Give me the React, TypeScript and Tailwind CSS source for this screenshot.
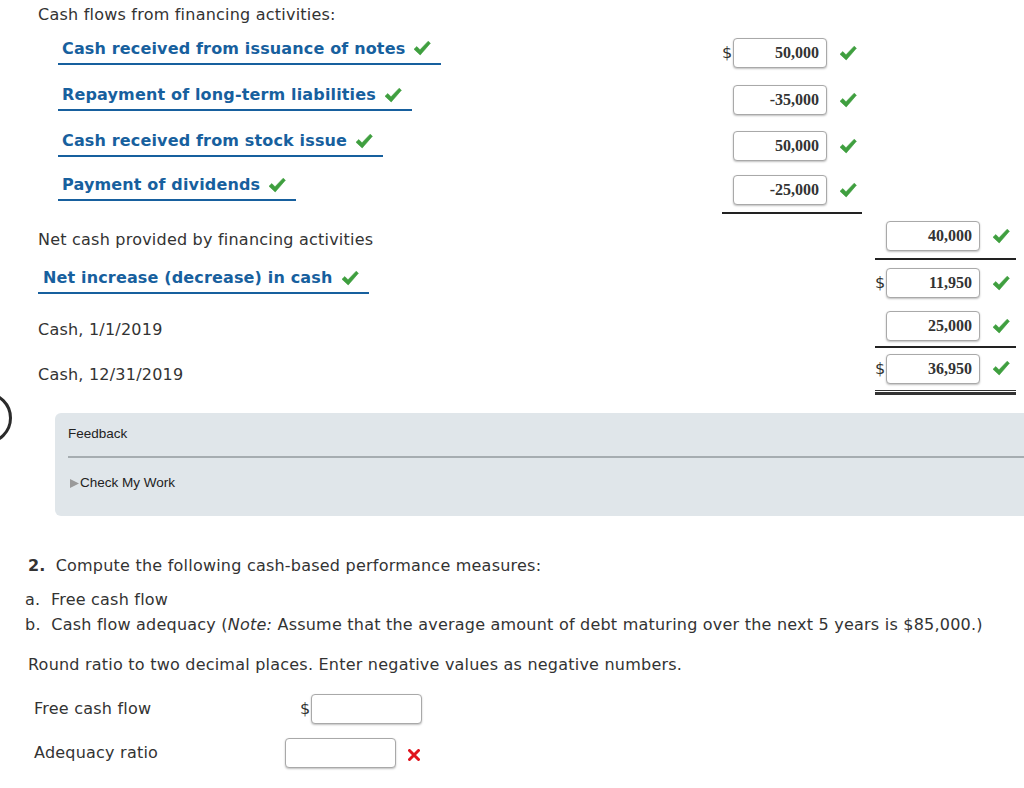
import React from 'react';

const BLUE = 'text-[#17609e]';

function Check() {
  return (
    <svg width="18" height="17" viewBox="0 0 18 17" className="shrink-0">
      <path d="M1 9.2 L3.8 6.6 L7 9.8 L15.2 1.2 L17.4 3.2 L7.2 15 Z" fill="#3f9f3f" strokeLinejoin="round" stroke="#3f9f3f" strokeWidth="0.6" />
    </svg>
  );
}

function Cross() {
  return (
    <svg width="12" height="12" viewBox="0 0 12 12">
      <path d="M1.5 1.5 L10.5 10.5 M10.5 1.5 L1.5 10.5" stroke="#e0141e" strokeWidth="3" strokeLinecap="round" />
    </svg>
  );
}

function NumBox({ value, w = 'w-[94px]' }: { value?: string; w?: string }) {
  return (
    <div
      className={`${w} h-[30px] rounded-[4px] border border-[#a9a9a9] bg-white shadow-[0_1px_2px_rgba(0,0,0,0.25)] flex items-center justify-end pr-[7px] text-[16px] tracking-normal font-bold text-[#333] font-['Liberation_Serif',serif]`}
    >
      {value}
    </div>
  );
}

// one amount cell: $ sign slot, box, tick
function Amount({ value, dollar }: { value: string; dollar?: boolean }) {
  return (
    <div className="flex items-center">
      <span className="w-[11px] text-[16px] text-[#333] font-['DejaVu_Sans',sans-serif]">{dollar ? '$' : ''}</span>
      <NumBox value={value} />
      <span className="ml-[12px]"><Check /></span>
    </div>
  );
}

function BlueLabel({ text, pad = 'pl-[4px]' }: { text: string; pad?: string }) {
  return (
    <div className={`inline-flex items-center gap-[8px] ${pad} pr-[10px] pb-[2px] border-b-2 border-[#17609e] font-bold tracking-[0.15px] ${BLUE}`}>
      <span>{text}</span>
      <Check />
    </div>
  );
}

export default function App() {
  return (
    <div className="w-[1024px] h-[788px] overflow-hidden bg-white relative font-['DejaVu_Sans',sans-serif] text-[16px] tracking-[0.22px] text-[#333]">
      {/* statement */}
      <div className="flex flex-col">
        <div className="h-[29px] flex items-center pl-[38px]">Cash flows from financing activities:</div>

        <div className="h-[48px] flex items-center">
          <div className="w-[722px] pl-[58px] pb-[5px]"><BlueLabel text="Cash received from issuance of notes" /></div>
          <Amount value="50,000" dollar />
        </div>
        <div className="h-[46px] flex items-center">
          <div className="w-[722px] pl-[58px] pb-[6px]"><BlueLabel text="Repayment of long-term liabilities" /></div>
          <Amount value="-35,000" />
        </div>
        <div className="h-[46px] flex items-center">
          <div className="w-[722px] pl-[58px] pb-[6px]"><BlueLabel text="Cash received from stock issue" /></div>
          <Amount value="50,000" />
        </div>
        <div className="h-[42px] flex items-center">
          <div className="w-[722px] pl-[58px] pb-[6px]"><BlueLabel text="Payment of dividends" /></div>
          <Amount value="-25,000" />
        </div>
        <div className="flex pl-[722px] pt-[1px]"><div className="w-[140px] h-[2px] bg-[#222]" /></div>

        <div className="h-[44px] flex items-center">
          <div className="w-[875px] pl-[38px] pt-[8px]">Net cash provided by financing activities</div>
          <Amount value="40,000" />
        </div>
        <div className="flex pl-[875px]"><div className="w-[141px] h-[2px] bg-[#222]" /></div>

        <div className="h-[46px] flex items-center">
          <div className="w-[875px] pl-[38px] pb-[6px]"><BlueLabel text="Net increase (decrease) in cash" pad="pl-[5px]" /></div>
          <Amount value="11,950" dollar />
        </div>
        <div className="h-[40px] flex items-center">
          <div className="w-[875px] pl-[38px] pt-[8px]">Cash, 1/1/2019</div>
          <Amount value="25,000" />
        </div>
        <div className="flex pl-[875px]"><div className="w-[141px] h-[2px] bg-[#222]" /></div>

        <div className="h-[41px] flex items-center">
          <div className="w-[875px] pl-[38px] pt-[13px]">Cash, 12/31/2019</div>
          <Amount value="36,950" dollar />
        </div>
        <div className="flex pl-[875px] pt-[1px]"><div className="w-[141px] h-[5px] border-t border-b-[3px] border-[#333]" /></div>
      </div>

      {/* stray circle at left edge */}
      <div className="absolute left-[-40px] top-[392px] w-[52px] h-[52px] rounded-full border-[3px] border-[#2b2b2b]" />

      {/* feedback */}
      <div className="ml-[55px] mt-[18px] h-[103px] rounded-l-[6px] bg-[#e0e6ea] pl-[13px] pt-[12px] font-['Liberation_Sans',sans-serif] text-[13.5px] tracking-normal text-[#222]">
        <div className="h-[18px] flex items-center">Feedback</div>
        <div className="mt-[13px] h-[2px] bg-[#a6adb1]" />
        <div className="mt-[16px] flex items-center h-[18px]">
          <svg width="11" height="9" viewBox="0 0 11 9" className="ml-[2px]">
            <path d="M0 0 L9 4.5 L0 9 Z" fill="#9a9a9a" />
          </svg>
          <span className="-ml-[1px]">Check My Work</span>
        </div>
      </div>

      {/* part 2 */}
      <div className="mt-[39px] pl-[28px] h-[22px] flex items-center">
        <span className="font-bold">2.</span>
        <span className="ml-[10px]">Compute the following cash-based performance measures:</span>
      </div>
      <div className="mt-[12px] pl-[25px] flex flex-col">
        <div className="h-[22px] flex items-center">a.&nbsp; Free cash flow</div>
        <div className="h-[22px] mt-[3px] flex items-center">
          b.&nbsp; Cash flow adequacy (<i>Note:</i>&nbsp;Assume that the average amount of debt maturing over the next 5 years is $85,000.)
        </div>
      </div>
      <div className="mt-[18px] pl-[28px] h-[22px] flex items-center">
        Round ratio to two decimal places. Enter negative values as negative numbers.
      </div>

      <div className="mt-[18px] pl-[34px] h-[30px] flex items-center">
        <span className="w-[266px]">Free cash flow</span>
        <span className="w-[11px]">$</span>
        <NumBox w="w-[111px]" />
      </div>
      <div className="mt-[13px] pl-[34px] h-[31px] flex items-center">
        <span className="w-[251px]">Adequacy ratio</span>
        <NumBox w="w-[111px]" />
        <span className="ml-[12px] mt-[4px]"><Cross /></span>
      </div>
    </div>
  );
}
